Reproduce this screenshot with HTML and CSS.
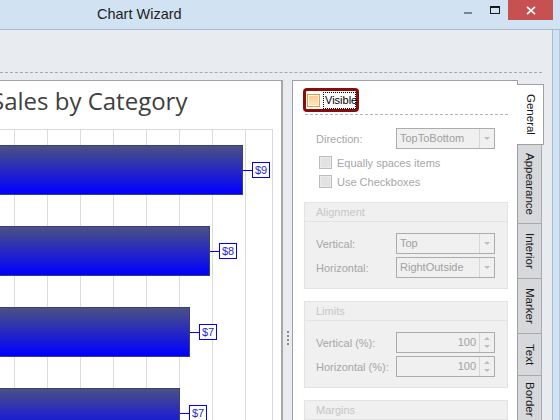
FILE: index.html
```html
<!DOCTYPE html>
<html>
<head>
<meta charset="utf-8">
<link rel="stylesheet" href="styles.css">
</head>
<body>
<div class="window">
  <div class="titlebar">
    <div class="title">Chart Wizard</div>
    <div class="btn-min"></div>
    <div class="btn-max"></div>
    <div class="btn-close">
      <svg width="10" height="9" viewBox="0 0 10 9"><path d="M1 0.8 L9 8.2 M9 0.8 L1 8.2" stroke="#fff" stroke-width="1.7" fill="none"/></svg>
    </div>
  </div>
  <div class="main">
    <div class="client">
      <div class="toolbar"></div>
      <div class="work">
        <div class="chart">
          <div class="chart-title">Sales by Category</div>
          <div class="plot">
            <div class="bar-row"><div class="bar" style="width:243px"></div><div class="leader"></div><div class="val">$9</div></div>
            <div class="bar-row"><div class="bar" style="width:210px"></div><div class="leader"></div><div class="val">$8</div></div>
            <div class="bar-row"><div class="bar" style="width:190px"></div><div class="leader"></div><div class="val">$7</div></div>
            <div class="bar-row"><div class="bar" style="width:180px"></div><div class="leader"></div><div class="val">$7</div></div>
          </div>
        </div>
        <div class="splitter"><div class="grip"></div></div>
        <div class="options">
          <div class="page">
            <div class="visible-wrap">
              <span class="chk-orange"><span></span></span>
              <span class="focus-label">Visible</span>
            </div>
            <div class="sep"></div>
            <div class="field-row top-row">
              <span class="lbl">Direction:</span>
              <div class="combo"><span class="combo-text">TopToBottom</span><span class="combo-btn"><i class="arrow-down"></i></span></div>
            </div>
            <div class="check-row first"><span class="chk"></span><span class="lbl">Equally spaces items</span></div>
            <div class="check-row"><span class="chk"></span><span class="lbl">Use Checkboxes</span></div>

            <div class="group">
              <div class="group-head">Alignment</div>
              <div class="group-body">
                <div class="field-row">
                  <span class="lbl">Vertical:</span>
                  <div class="combo"><span class="combo-text">Top</span><span class="combo-btn"><i class="arrow-down"></i></span></div>
                </div>
                <div class="field-row">
                  <span class="lbl">Horizontal:</span>
                  <div class="combo"><span class="combo-text">RightOutside</span><span class="combo-btn"><i class="arrow-down"></i></span></div>
                </div>
              </div>
            </div>

            <div class="group">
              <div class="group-head">Limits</div>
              <div class="group-body">
                <div class="field-row">
                  <span class="lbl">Vertical (%):</span>
                  <div class="combo"><span class="combo-text num">100</span><span class="combo-btn spin"><i class="arrow-up"></i><i class="arrow-down"></i></span></div>
                </div>
                <div class="field-row">
                  <span class="lbl">Horizontal (%):</span>
                  <div class="combo"><span class="combo-text num">100</span><span class="combo-btn spin"><i class="arrow-up"></i><i class="arrow-down"></i></span></div>
                </div>
              </div>
            </div>

            <div class="group">
              <div class="group-head">Margins</div>
              <div class="group-body tall"></div>
            </div>
          </div>
          <div class="tabs">
            <div class="tab active t-general"><span>General</span></div>
            <div class="tab t-appearance"><span>Appearance</span></div>
            <div class="tab t-interior"><span>Interior</span></div>
            <div class="tab t-marker"><span>Marker</span></div>
            <div class="tab t-text"><span>Text</span></div>
            <div class="tab t-border"><span>Border</span></div>
          </div>
        </div>
      </div>
    </div>
    <div class="frame"></div>
  </div>
</div>
</body>
</html>
```
FILE: styles.css
```css
* { box-sizing: border-box; }
html, body { margin: 0; padding: 0; }
body {
  width: 560px;
  height: 420px;
  overflow: hidden;
  font-family: "Liberation Sans", Arial, sans-serif;
  font-size: 11px;
}
.window {
  width: 560px;
  height: 420px;
  display: flex;
  flex-direction: column;
  background: #d1e2f2;
}
.titlebar {
  height: 30px;
  flex: none;
  display: flex;
  align-items: flex-start;
  border-bottom: 1px solid #a9bccf;
}
.title {
  flex: 1;
  padding-left: 97px;
  font-size: 14.5px;
  line-height: 29px;
  color: #1e1e1e;
}
.btn-min {
  width: 8px;
  height: 2px;
  margin-top: 12px;
  margin-right: 18px;
  background: #7a8694;
}
.btn-max {
  width: 10px;
  height: 8px;
  margin-top: 6px;
  margin-right: 8px;
  border: 1px solid #1a1a1a;
  border-top-width: 2px;
}
.btn-close {
  width: 45px;
  height: 20px;
  margin-right: 7px;
  background: #c75050;
  display: flex;
  align-items: center;
  justify-content: center;
}
.btn-close svg { display: block; }

.main {
  flex: 1;
  min-height: 0;
  display: flex;
}
.client {
  width: 553px;
  flex: none;
  background: #e8ebef;
  border-right: 1px solid #a9bccf;
  display: flex;
  flex-direction: column;
  overflow: hidden;
}
.frame {
  flex: 1;
  border-right: 1px solid #b9c6d3;
}
.toolbar {
  height: 43px;
  flex: none;
  margin-right: 10px;
  border-bottom: 1px dashed #a8a8a8;
}
.work {
  flex: 1;
  min-height: 0;
  display: flex;
  margin-top: 7px;
}

/* chart */
.chart {
  width: 283px;
  flex: none;
  background: #fff;
  border-top: 1px solid #a0a0a0;
  border-right: 2px solid #a8a8a8;
  overflow: hidden;
}
.chart-title {
  height: 48px;
  line-height: 40px;
  margin-left: -9px;
  font-family: "Open Sans", "Liberation Sans", sans-serif;
  font-size: 24px;
  color: #404040;
  white-space: nowrap;
}
.plot {
  width: 273px;
  height: 400px;
  border-top: 1px solid #d8d8d8;
  border-right: 1px solid #d8d8d8;
  background-image: linear-gradient(to right, #dcdcdc 1px, transparent 1px);
  background-size: 33px 100%;
  background-position: 14px 0;
  background-repeat: repeat-x;
  padding-top: 15px;
  display: flex;
  flex-direction: column;
  gap: 31px;
}
.bar-row {
  height: 50px;
  display: flex;
  align-items: center;
  flex: none;
}
.bar {
  height: 50px;
  border: 1px solid #383e7e;
  border-left: none;
  background: linear-gradient(#4b5183, #0000ff);
}
.leader {
  width: 9px;
  height: 1px;
  background: #0000ff;
}
.val {
  height: 16px;
  padding: 0 2px;
  border: 1px solid #0000ff;
  background: #fff;
  color: #2626d8;
  font-size: 11px;
  line-height: 14px;
}

/* splitter */
.splitter {
  width: 9px;
  flex: none;
  padding-left: 4px;
}
.grip {
  width: 2px;
  height: 14px;
  margin-top: 251px;
  background-image: linear-gradient(#8c8c8c 2px, transparent 2px);
  background-size: 2px 4px;
}

/* options */
.options {
  flex: 1;
  display: flex;
}
.page {
  width: 226px;
  flex: none;
  background: #fff;
  border: 1px solid #a0a0a0;
  border-bottom: none;
  padding: 7px 9px 0 11px;
  color: #a6a6a6;
}
.visible-wrap {
  display: inline-flex;
  align-items: center;
  height: 24px;
  width: 56px;
  margin-left: -1px;
  padding-left: 1px;
  border: 3px solid #880c0c;
  border-radius: 4px;
  color: #000;
}
.chk-orange {
  width: 13px;
  height: 13px;
  border: 1px solid #e2a043;
  background: #fff3e2;
  padding: 1px;
  display: block;
}
.chk-orange span {
  display: block;
  width: 9px;
  height: 9px;
  background: linear-gradient(#f8cd93, #fde5c2);
}
.focus-label {
  margin-left: 3px;
  height: 17px;
  width: 33px;
  border: 1px dotted #000;
  padding-left: 1px;
  line-height: 15px;
  font-size: 11px;
}
.sep {
  margin: 2px 0 0 1px;
  border-top: 1px dashed #b4b4b4;
}
.field-row {
  height: 21px;
  display: flex;
  align-items: center;
  padding-left: 12px;
}
.field-row.top-row { margin-top: 13px; }
.lbl { white-space: nowrap; }
.field-row .lbl { width: 80px; flex: none; }
.combo {
  width: 99px;
  height: 21px;
  flex: none;
  display: flex;
  border: 1px solid #acacac;
  background: #f0f0f0;
}
.combo-text {
  flex: 1;
  padding-left: 3px;
  line-height: 19px;
  color: #a0a0a0;
  white-space: nowrap;
}
.combo-text.num {
  text-align: right;
  padding-right: 3px;
}
.combo-btn {
  width: 15px;
  flex: none;
  border-left: 1px solid #d6d6d6;
  display: flex;
  align-items: center;
  justify-content: center;
}
.combo-btn.spin {
  flex-direction: column;
  gap: 5px;
}
.arrow-down {
  display: block;
  width: 0;
  height: 0;
  border-left: 3px solid transparent;
  border-right: 3px solid transparent;
  border-top: 3px solid #bdbdbd;
}
.arrow-up {
  display: block;
  width: 0;
  height: 0;
  border-left: 3px solid transparent;
  border-right: 3px solid transparent;
  border-bottom: 3px solid #bdbdbd;
}
.check-row {
  height: 19px;
  display: flex;
  align-items: center;
  padding-left: 15px;
}
.check-row.first { margin-top: 4px; }
.chk {
  width: 13px;
  height: 13px;
  flex: none;
  margin-right: 5px;
  border: 1px solid #bcbcbc;
  background: #e2e2e2;
  box-shadow: inset 0 0 0 1px #ececec;
}
.group {
  margin-top: 12px;
  border: 1px solid #e3e3e3;
  background: #f0f0f0;
}
.check-row + .group { margin-top: 11px; }
.group-head {
  height: 19px;
  padding-left: 11px;
  line-height: 18px;
  border-bottom: 1px solid #e3e3e3;
  color: #c6c6c6;
}
.group-body {
  padding: 11px 0 10px 0;
  display: flex;
  flex-direction: column;
  gap: 3px;
}
.group-body .field-row { padding-left: 11px; }
.group-body.tall { height: 80px; }

/* tabs */
.tabs {
  width: 26px;
  flex: none;
  display: flex;
  flex-direction: column;
  padding-top: 4px;
}
.tab {
  width: 24px;
  flex: none;
  display: flex;
  align-items: center;
  justify-content: center;
  background: #d6d8dc;
  border-right: 1px solid #a8aaad;
  border-bottom: 1px solid #a8aaad;
  color: #1a1a1a;
  font-size: 11.5px;
}
.tab span {
  writing-mode: vertical-rl;
  white-space: nowrap;
}
.tab.active {
  width: 27px;
  margin-left: -1px;
  background: #fff;
  border-top: 1px solid #a0a0a0;
  border-right: 1px solid #a0a0a0;
  border-bottom: 1px solid #a0a0a0;
  padding-left: 1px;
}
.t-general { height: 61px; }
.t-appearance { height: 79px; }
.t-interior { height: 55px; }
.t-marker { height: 55px; }
.t-text { height: 42px; }
.t-border { height: 48px; }
```
